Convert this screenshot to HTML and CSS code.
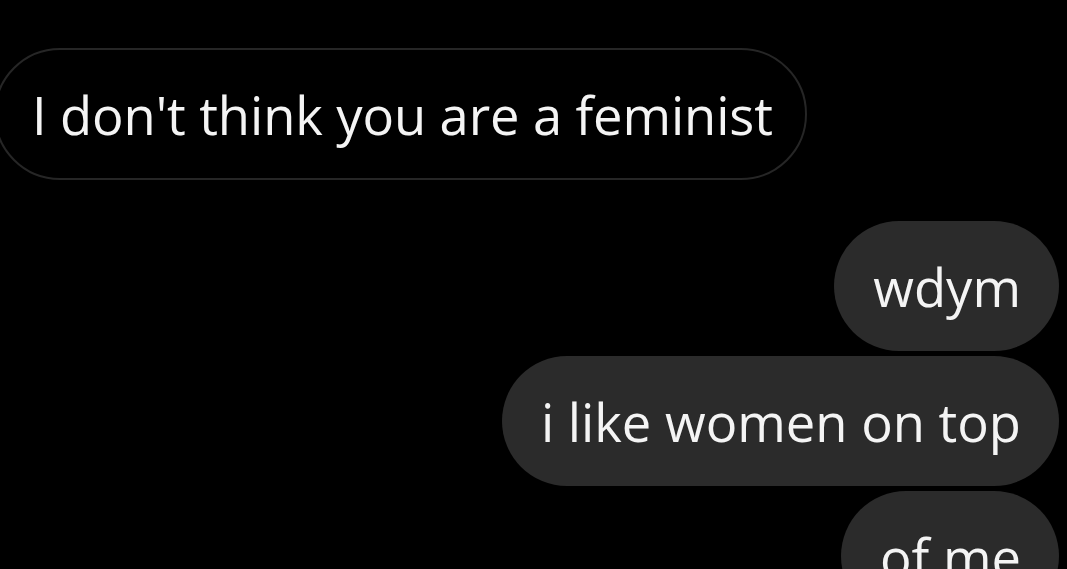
FILE: index.html
```html
<!DOCTYPE html>
<html>
<head>
<meta charset="utf-8">
<link rel="stylesheet" href="styles.css">
</head>
<body>
<div class="chat">
  <div class="row in"><div class="bubble recv">I don't think you are a feminist</div></div>
  <div class="row out first"><div class="bubble sent">wdym</div></div>
  <div class="row out"><div class="bubble sent">i like women on top</div></div>
  <div class="row out"><div class="bubble sent">of me</div></div>
</div>
</body>
</html>
```
FILE: styles.css
```css
html, body {
  margin: 0;
  padding: 0;
  background: #000;
}
body {
  width: 1067px;
  height: 569px;
  overflow: hidden;
}
.chat {
  display: flex;
  flex-direction: column;
  padding: 48px 8px 0 0;
  margin-left: -6px;
  font-family: "Open Sans", "Liberation Sans", sans-serif;
  font-size: 52.5px;
  color: #f4f4f4;
}
.row {
  display: flex;
}
.row.in { justify-content: flex-start; }
.row.out { justify-content: flex-end; margin-top: 5px; }
.row.out.first { margin-top: 41px; }
.bubble {
  box-sizing: border-box;
  border-radius: 66px;
  display: flex;
  align-items: center;
  white-space: nowrap;
}
.recv {
  height: 132px;
  border: 2px solid #262626;
  padding: 0 32px 0 36px;
  letter-spacing: -0.1px;
}
.sent {
  height: 130px;
  background: #2b2b2b;
  padding: 0 38px 0 39px;
}
```
